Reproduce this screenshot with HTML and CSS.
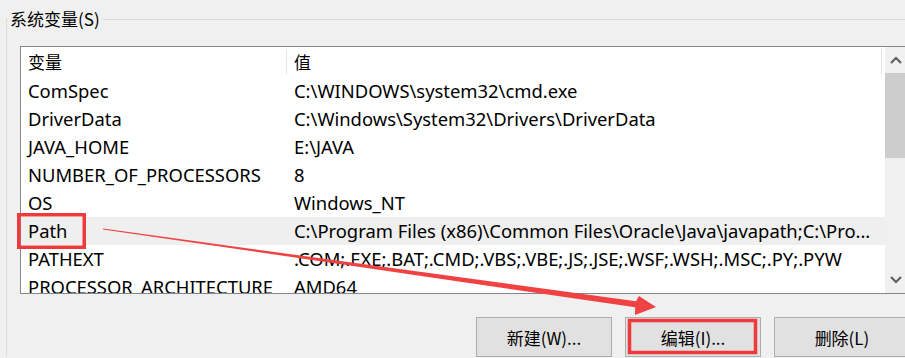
FILE: index.html
```html
<!DOCTYPE html>
<html lang="zh-CN">
<head>
<meta charset="utf-8">
<title>系统变量</title>
<link rel="stylesheet" href="styles.css">
</head>
<body>
<div class="page">
  <fieldset class="group">
    <legend class="group-title">系统变量(S)</legend>
    <div class="listbox">
      <div class="list-content">
        <div class="row header">
          <div class="cell name">变量</div>
          <div class="cell value">值</div>
          <div class="cell rest"></div>
        </div>
        <div class="row"><div class="cell name">ComSpec</div><div class="cell value">C:\WINDOWS\system32\cmd.exe</div></div>
        <div class="row"><div class="cell name">DriverData</div><div class="cell value">C:\Windows\System32\Drivers\DriverData</div></div>
        <div class="row"><div class="cell name">JAVA_HOME</div><div class="cell value">E:\JAVA</div></div>
        <div class="row"><div class="cell name">NUMBER_OF_PROCESSORS</div><div class="cell value">8</div></div>
        <div class="row"><div class="cell name">OS</div><div class="cell value">Windows_NT</div></div>
        <div class="row selected"><div class="cell name">Path</div><div class="cell value">C:\Program Files (x86)\Common Files\Oracle\Java\javapath;C:\Pro...</div></div>
        <div class="row"><div class="cell name">PATHEXT</div><div class="cell value">.COM;.EXE;.BAT;.CMD;.VBS;.VBE;.JS;.JSE;.WSF;.WSH;.MSC;.PY;.PYW</div></div>
        <div class="row"><div class="cell name">PROCESSOR_ARCHITECTURE</div><div class="cell value">AMD64</div></div>
      </div>
      <div class="scrollbar">
        <div class="sb-btn">
          <svg width="12" height="8" viewBox="0 0 12 8"><path d="M1 7 L6 2 L11 7" fill="none" stroke="#606060" stroke-width="2.2"/></svg>
        </div>
        <div class="sb-thumb"></div>
        <div class="sb-track"></div>
        <div class="sb-btn">
          <svg width="12" height="8" viewBox="0 0 12 8"><path d="M1 1 L6 6 L11 1" fill="none" stroke="#606060" stroke-width="2.2"/></svg>
        </div>
      </div>
    </div>
    <div class="buttons">
      <button class="btn">新建(W)...</button>
      <button class="btn">编辑(I)...</button>
      <button class="btn">删除(L)</button>
    </div>
  </fieldset>
  <svg class="annotations" width="905" height="358" viewBox="0 0 905 358">
    <rect x="18.75" y="214.75" width="65.5" height="32.5" fill="none" stroke="#ee3a3a" stroke-width="3.5"/>
    <rect x="629.5" y="320.5" width="126" height="32" fill="none" stroke="#ee3a3a" stroke-width="3.5"/>
    <polygon points="103,228.6 636,301.3 639,296 656,307 635,315 635.2,307.3 103,229.4" fill="#f04242"/>
  </svg>
</div>
</body>
</html>
```
FILE: styles.css
```css
html, body {
  margin: 0;
  padding: 0;
  background: #f0f0f0;
  overflow: hidden;
}
body {
  width: 905px;
  height: 358px;
  font-family: "Noto Sans", "Noto Sans CJK SC", sans-serif;
  font-size: 18.4px;
  color: #000;
}
.page {
  position: relative;
  width: 905px;
  height: 358px;
  overflow: hidden;
}
.group {
  margin: 9px 0 0 6px;
  padding: 0;
  border: none;
  border-top: 1px solid #dcdcdc;
  border-left: 1px solid #dcdcdc;
  min-width: 0;
}
.group-title {
  padding: 0 2px;
  margin-left: 1px;
  font-family: "Noto Sans CJK SC", "Noto Sans", sans-serif;
  font-size: 17px;
  line-height: 20px;
  color: #000;
}
.listbox {
  display: flex;
  margin: 17px -1px 0 13px;
  height: 246px;
  border: 1px solid #828790;
  border-right: none;
  background: #fff;
}
.list-content {
  flex: 1;
  overflow: hidden;
}
.row {
  display: flex;
  height: 28px;
  line-height: 28px;
  white-space: nowrap;
}
.row.header {
  height: 30px;
  line-height: 30px;
  font-family: "Noto Sans CJK SC", "Noto Sans", sans-serif;
  font-size: 17px;
}
.row.selected {
  background: #efefef;
}
.cell {
  padding-left: 7px;
  box-sizing: border-box;
  overflow: hidden;
}
.cell.name {
  width: 266px;
  flex: none;
}
.cell.value {
  flex: 1;
}
.header .cell.value {
  flex: none;
  width: 595px;
}
.header .cell.name,
.header .cell.value {
  border-right: 1px solid #e5e5e5;
  margin: 2px 0 2px 0;
  line-height: 26px;
}
.header .cell.rest {
  flex: 1;
  padding: 0;
}
.scrollbar {
  width: 21px;
  flex: none;
  display: flex;
  flex-direction: column;
  background: #f0f0f0;
}
.sb-btn {
  height: 26px;
  display: flex;
  align-items: center;
  justify-content: center;
  flex: none;
}
.sb-thumb {
  height: 85px;
  background: #cdcdcd;
  flex: none;
}
.sb-track {
  flex: 1;
}
.buttons {
  display: flex;
  justify-content: flex-end;
  gap: 13px;
  margin: 23px -5px 0 0;
}
.btn {
  width: 136px;
  height: 40px;
  background: #e1e1e1;
  border: 1px solid #adadad;
  border-radius: 0;
  font-family: "Noto Sans CJK SC", "Noto Sans", sans-serif;
  font-size: 17px;
  color: #000;
  padding: 0;
}
.annotations {
  position: absolute;
  left: 0;
  top: 0;
  pointer-events: none;
}
```
